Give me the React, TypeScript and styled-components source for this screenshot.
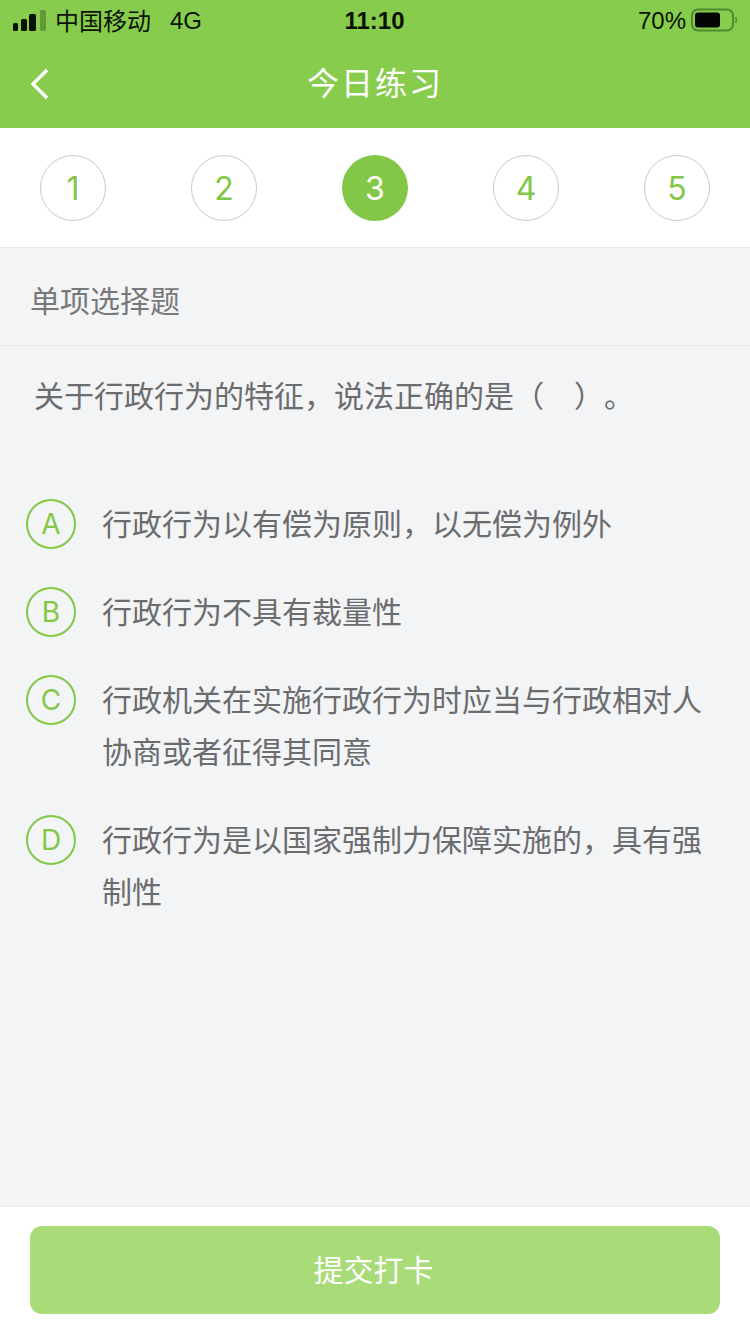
import React from 'react';
import styled, { createGlobalStyle } from 'styled-components';

const GlobalStyle = createGlobalStyle`
  html, body {
    margin: 0;
    padding: 0;
    background: #f3f4f6;
  }
  * {
    box-sizing: border-box;
  }
`;

const FONT = '"Liberation Sans", "Noto Sans CJK SC", sans-serif';
const BADGE_FONT = 'Inter, "Noto Sans CJK SC", sans-serif';

const Page = styled.div`
  width: 750px;
  height: 1334px;
  display: flex;
  flex-direction: column;
  background: #f3f4f6;
  font-family: ${FONT};
  overflow: hidden;
`;

const Header = styled.header`
  background: #87cc4c;
  height: 128px;
  flex: none;
`;

const StatusBar = styled.div`
  height: 40px;
  padding: 2px 13px 0;
  display: grid;
  grid-template-columns: 1fr auto 1fr;
  align-items: center;
  color: #0a1206;
  font-size: 24px;
  line-height: 28px;
`;

const StatusLeft = styled.div`
  display: flex;
  align-items: center;
`;

const Carrier = styled.span`
  margin-left: 9px;
  height: 28px;
  line-height: 29px;
`;

const Network = styled.span`
  margin-left: 19px;
`;

const Clock = styled.div`
  font-weight: 700;
  font-size: 24px;
  margin-left: -1px;
`;

const StatusRight = styled.div`
  display: flex;
  justify-content: flex-end;
  align-items: center;
  gap: 5px;
`;

const SignalGlyph = styled.svg`
  display: block;
  margin-top: -2px;
`;

const BatteryGlyph = styled.svg`
  display: block;
  margin-top: -3px;
`;

const NavBar = styled.div`
  height: 88px;
  padding: 0 30px;
  display: grid;
  grid-template-columns: 1fr auto 1fr;
  align-items: center;
  color: #fff;
`;

const BackIcon = styled.svg`
  display: block;
  width: 20px;
  height: 32px;
`;

const NavTitle = styled.h1`
  margin: 0;
  font-size: 32px;
  line-height: 44px;
  font-weight: 400;
  letter-spacing: 2px;
`;

const Steps = styled.nav`
  flex: none;
  height: 120px;
  padding: 27px 40px 0;
  display: flex;
  justify-content: space-between;
  background: #fff;
  border-bottom: 1px solid #e8e9ea;
`;

const Step = styled.div<{ $active?: boolean }>`
  width: 66px;
  height: 66px;
  border-radius: 50%;
  display: flex;
  align-items: center;
  justify-content: center;
  font-family: ${BADGE_FONT};
  font-weight: 400;
  font-size: 32px;
  background: ${p => (p.$active ? '#82c846' : '#fff')};
  color: ${p => (p.$active ? '#fff' : '#82c846')};
  border: ${p => (p.$active ? 'none' : '1px solid #c9c9c9')};
`;

const SectionTitle = styled.div`
  flex: none;
  height: 98px;
  padding: 5px 30px 0;
  display: flex;
  align-items: center;
  font-size: 30px;
  color: #777879;
  border-bottom: 1px solid #e6e7e9;
`;

const Question = styled.p`
  flex: none;
  margin: 0;
  padding: 25px 34px 0;
  height: 152px;
  font-size: 30px;
  line-height: 52px;
  color: #6b6c6e;
  text-spacing-trim: space-all;
`;

const Options = styled.ul`
  flex: 1;
  margin: 0;
  padding: 0 40px 0 26px;
  list-style: none;
  display: flex;
  flex-direction: column;
  gap: 36px;
`;

const OptionRow = styled.li`
  display: flex;
  align-items: flex-start;
`;

const OptionBadge = styled.span`
  flex: none;
  width: 50px;
  height: 50px;
  margin-top: 1px;
  margin-right: 26px;
  border: 2px solid #82c846;
  border-radius: 50%;
  display: flex;
  align-items: center;
  justify-content: center;
  color: #82c846;
  font-family: ${BADGE_FONT};
  font-weight: 400;
  font-size: 28px;
`;

const OptionText = styled.span`
  margin: 1px 0 -1px;
  font-size: 30px;
  line-height: 52px;
  color: #6b6c6e;
`;

const Footer = styled.footer`
  flex: none;
  height: 128px;
  padding: 19px 30px 0;
  background: #fff;
  border-top: 1px solid #e8e9ec;
`;

const SubmitButton = styled.button`
  display: block;
  width: 100%;
  height: 88px;
  border: none;
  border-radius: 12px;
  background: #a9dc79;
  color: #fff;
  font-family: ${FONT};
  font-size: 30px;
  padding: 0 3px 4px 0;
`;

const SignalIcon = () => (
  <SignalGlyph width="33" height="21" viewBox="0 0 33 21">
    <rect x="0" y="13" width="5" height="8" rx="1.5" fill="#0a1206" />
    <rect x="8" y="9" width="6" height="12" rx="1.5" fill="#0a1206" />
    <rect x="16" y="4" width="7" height="17" rx="1.5" fill="#0a1206" />
    <rect x="27" y="0" width="6" height="21" rx="1.5" fill="#5f9a36" />
  </SignalGlyph>
);

const BatteryIcon = () => (
  <BatteryGlyph width="46" height="24" viewBox="0 0 46 24">
    <rect x="1" y="1.5" width="41" height="21" rx="6" fill="none" stroke="#4f8a2c" strokeWidth="2" />
    <rect x="4" y="4.5" width="25" height="15" rx="3" fill="#050505" />
    <path d="M44.5 9 Q46 12 44.5 15" fill="none" stroke="#4f8a2c" strokeWidth="1.5" />
  </BatteryGlyph>
);

const STEPS = [1, 2, 3, 4, 5];
const ACTIVE_STEP = 3;

const OPTIONS = [
  { key: 'A', text: '行政行为以有偿为原则，以无偿为例外' },
  { key: 'B', text: '行政行为不具有裁量性' },
  { key: 'C', text: '行政机关在实施行政行为时应当与行政相对人协商或者征得其同意' },
  { key: 'D', text: '行政行为是以国家强制力保障实施的，具有强制性' }
];

const App = () => {
  return (
    <Page>
      <GlobalStyle />
      <Header>
        <StatusBar>
          <StatusLeft>
            <SignalIcon />
            <Carrier>中国移动</Carrier>
            <Network>4G</Network>
          </StatusLeft>
          <Clock>11:10</Clock>
          <StatusRight>
            70%
            <BatteryIcon />
          </StatusRight>
        </StatusBar>
        <NavBar>
          <BackIcon viewBox="0 0 20 32">
            <path d="M17 2 L3 16 L17 30" fill="none" stroke="#fff" strokeWidth="3.4" />
          </BackIcon>
          <NavTitle>今日练习</NavTitle>
        </NavBar>
      </Header>
      <Steps>
        {STEPS.map(n => (
          <Step key={n} $active={n === ACTIVE_STEP}>
            {n}
          </Step>
        ))}
      </Steps>
      <SectionTitle>单项选择题</SectionTitle>
      <Question>关于行政行为的特征，说法正确的是（{'\u3000'}）。</Question>
      <Options>
        {OPTIONS.map(o => (
          <OptionRow key={o.key}>
            <OptionBadge>{o.key}</OptionBadge>
            <OptionText>{o.text}</OptionText>
          </OptionRow>
        ))}
      </Options>
      <Footer>
        <SubmitButton>提交打卡</SubmitButton>
      </Footer>
    </Page>
  );
};

export default App;
